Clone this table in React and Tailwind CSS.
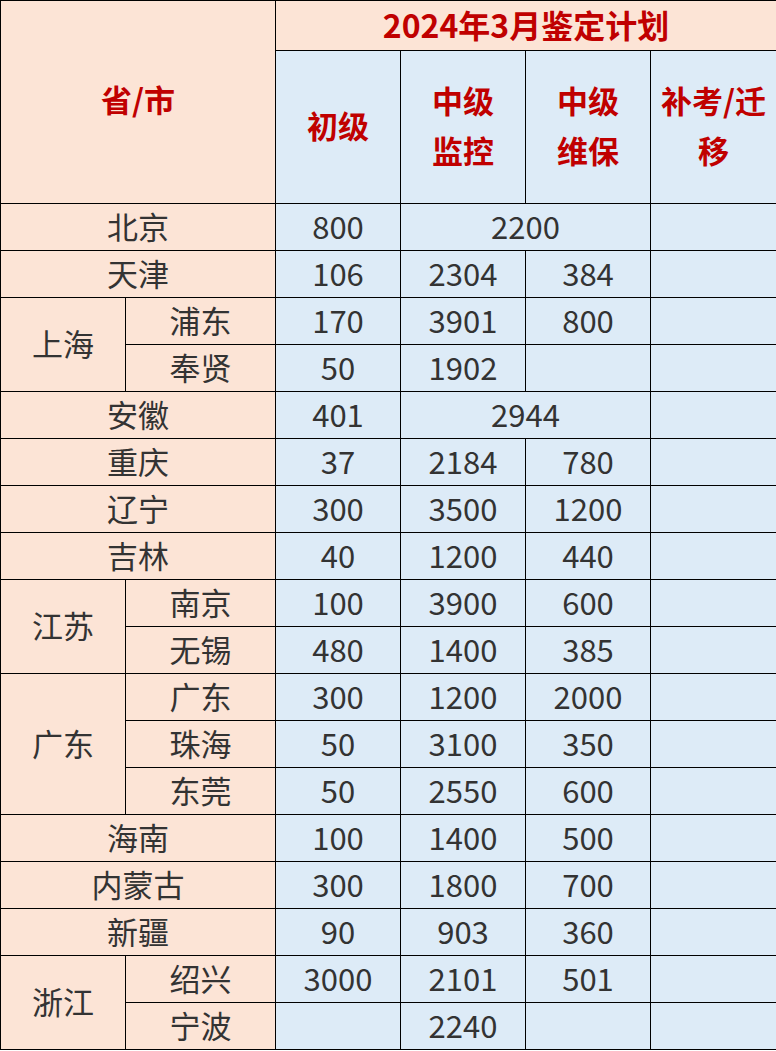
export default function App() {
  const F = { fontFamily: '"Noto Sans CJK SC", "Noto Sans", sans-serif' };
  const pe = "bg-[#fce4d6]";
  const bl = "bg-[#ddebf7]";
  const td = "border-[1.5px] border-black text-center align-middle p-0 pb-[4px] text-[31px] text-[#333333] leading-none";
  const rows = [
    { a: "北京", span1: true, v: ["800", { t: "2200", c: 2 }, ""] },
    { a: "天津", span1: true, v: ["106", "2304", "384", ""] },
    { a: "上海", rs: 2, b: "浦东", v: ["170", "3901", "800", ""] },
    { b: "奉贤", v: ["50", "1902", "", ""] },
    { a: "安徽", span1: true, v: ["401", { t: "2944", c: 2 }, ""] },
    { a: "重庆", span1: true, v: ["37", "2184", "780", ""] },
    { a: "辽宁", span1: true, v: ["300", "3500", "1200", ""] },
    { a: "吉林", span1: true, v: ["40", "1200", "440", ""] },
    { a: "江苏", rs: 2, b: "南京", v: ["100", "3900", "600", ""] },
    { b: "无锡", v: ["480", "1400", "385", ""] },
    { a: "广东", rs: 3, b: "广东", v: ["300", "1200", "2000", ""] },
    { b: "珠海", v: ["50", "3100", "350", ""] },
    { b: "东莞", v: ["50", "2550", "600", ""] },
    { a: "海南", span1: true, v: ["100", "1400", "500", ""] },
    { a: "内蒙古", span1: true, v: ["300", "1800", "700", ""] },
    { a: "新疆", span1: true, v: ["90", "903", "360", ""] },
    { a: "浙江", rs: 2, b: "绍兴", v: ["3000", "2101", "501", ""] },
    { b: "宁波", v: ["", "2240", "", ""] },
  ];
  const hd = "border-[1.5px] border-black text-center align-middle p-0 pb-[4px] text-[31px] font-bold text-[#c00000]";
  return (
    <div className="w-[776px] h-[1051px] bg-white overflow-hidden" style={F}>
      <table className="table-fixed border-collapse w-[776px]">
        <colgroup>
          <col className="w-[125px]" />
          <col className="w-[150px]" />
          <col className="w-[125px]" />
          <col className="w-[125px]" />
          <col className="w-[125px]" />
          <col className="w-[126px]" />
        </colgroup>
        <tbody>
          <tr className="h-[50px]">
            <td colSpan={2} rowSpan={2} className={`${hd} ${pe} leading-none`}>
              <span className="relative top-[-2px]">省/市</span>
            </td>
            <td colSpan={4} className={`${hd} ${pe} leading-none text-[32px]`}>2024年3月鉴定计划</td>
          </tr>
          <tr className="h-[153px]">
            <td className={`${hd} ${bl} leading-[50px]`}>初级</td>
            <td className={`${hd} ${bl} leading-[50px]`}>中级<br />监控</td>
            <td className={`${hd} ${bl} leading-[50px]`}>中级<br />维保</td>
            <td className={`${hd} ${bl} leading-[50px]`}>补考/迁<br />移</td>
          </tr>
          {rows.map((r, i) => (
            <tr key={i} className="h-[47px]">
              {r.span1 && (
                <td colSpan={2} className={`${td} ${pe}`}>{r.a}</td>
              )}
              {r.rs && (
                <td rowSpan={r.rs} className={`${td} ${pe}`}>{r.a}</td>
              )}
              {r.b && <td className={`${td} ${pe}`}>{r.b}</td>}
              {r.v.map((c, j) =>
                typeof c === "object" ? (
                  <td key={j} colSpan={c.c} className={`${td} ${bl}`}>{c.t}</td>
                ) : (
                  <td key={j} className={`${td} ${bl}`}>{c}</td>
                )
              )}
            </tr>
          ))}
        </tbody>
      </table>
    </div>
  );
}
